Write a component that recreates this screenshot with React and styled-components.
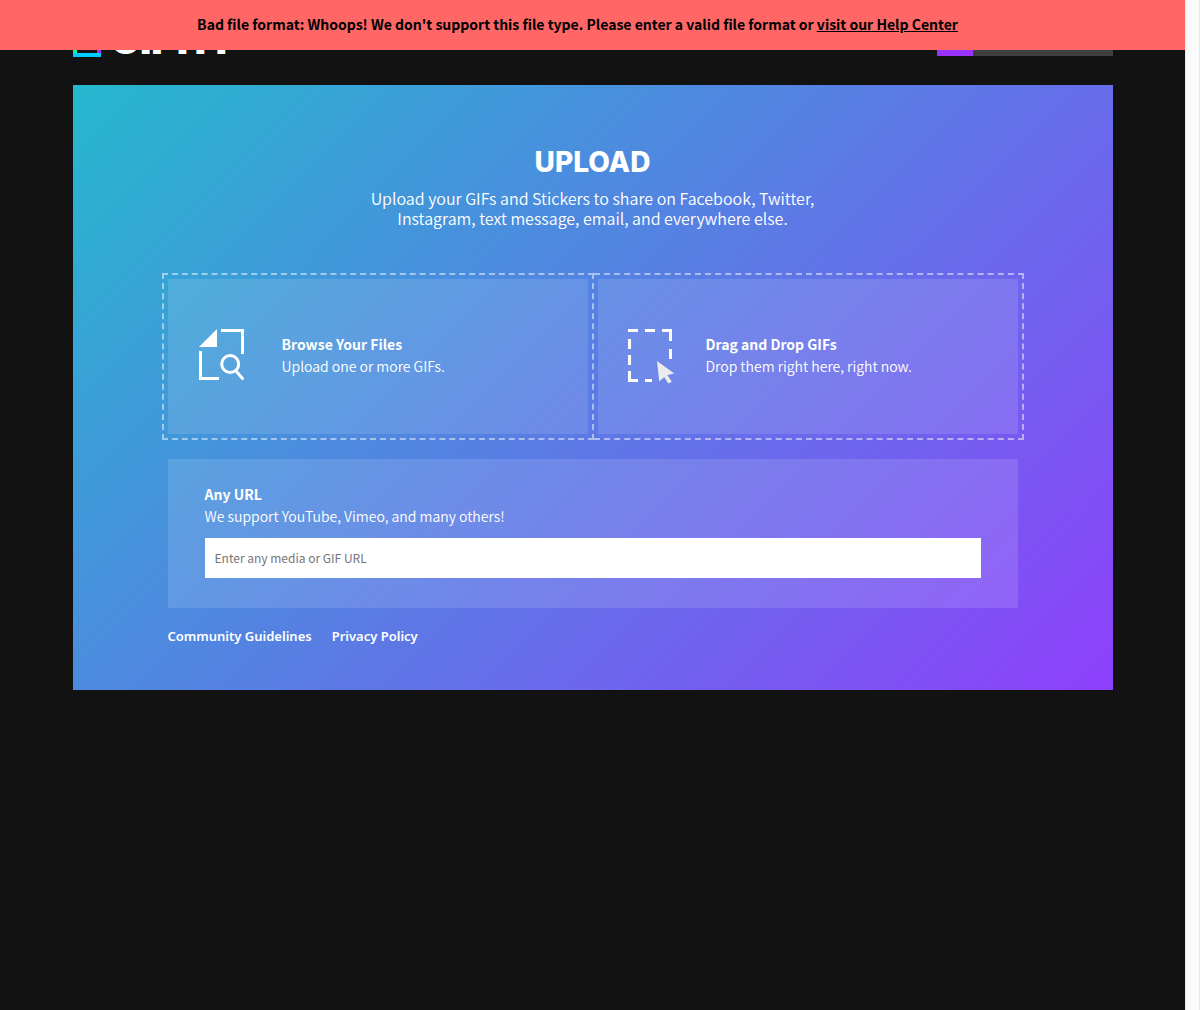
import React from "react";
import styled, { createGlobalStyle } from "styled-components";

const GlobalStyle = createGlobalStyle`
  *, *::before, *::after { box-sizing: border-box; }
  body {
    margin: 0;
    background: #121212;
    color: #fff;
    font-family: "Noto Sans CJK JP", "Noto Sans", sans-serif;
    font-size: 14px;
    line-height: 22px;
  }
`;

const Shell = styled.div`
  display: flex;
  min-height: 100vh;
`;

const Page = styled.div`
  position: relative;
  flex: 1;
  min-width: 0;
`;

const ScrollTrack = styled.div`
  flex: 0 0 15px;
  background: #fafafa;
  border: 1px solid #e8e8e8;
  border-width: 0 1px;
`;

const Banner = styled.div`
  position: absolute;
  top: 0;
  left: 0;
  right: 0;
  z-index: 2;
  padding: 13px 60px 15px 30px;
  background: #ff6666;
  color: #000;
  font-weight: 700;
  text-align: center;
`;

const BannerLink = styled.a`
  color: inherit;
  text-decoration: underline;
`;

const Container = styled.div`
  max-width: 1040px;
  margin: 0 auto;
`;

const Header = styled.header`
  display: flex;
  justify-content: space-between;
  align-items: flex-start;
  padding: 20px 0 28px;
`;

const Brand = styled.a`
  display: flex;
  align-items: flex-end;
  gap: 10px;
  color: #fff;
  text-decoration: none;
`;

const BrandName = styled.span`
  font-family: Inter, "Noto Sans", sans-serif;
  font-size: 39px;
  font-weight: 900;
  line-height: 35px;
`;

const Search = styled.form`
  display: flex;
  width: 176px;
  height: 36px;
`;

const SearchButton = styled.button`
  flex: 0 0 36px;
  padding: 0;
  border: 0;
  background: #9933ff;
`;

const SearchInput = styled.input`
  flex: 1;
  min-width: 0;
  border: 0;
  padding: 0 10px;
  background: #3e3e3e;
  color: #fff;
`;

const Panel = styled.main`
  padding: 63px 89px 43px;
  background: linear-gradient(135deg, #25b8ce, #8e40fb);
`;

const Title = styled.h1`
  margin: 0 0 12px;
  font-family: Inter, "Noto Sans", sans-serif;
  font-size: 28px;
  font-weight: 800;
  line-height: 28px;
  text-align: center;
`;

const Intro = styled.p`
  max-width: 460px;
  margin: 0 auto 45px;
  font-size: 16px;
  font-weight: 350;
  line-height: 20px;
  text-align: center;
`;

const Sources = styled.div`
  display: flex;
  margin-bottom: 19px;
`;

const Source = styled.div`
  box-sizing: content-box;
  flex: 1 1 0;
  padding: 4px;
  border: 2px dashed rgba(255, 255, 255, 0.5);

  & + & {
    border-left: 0;
  }
`;

const SourceButton = styled.button`
  display: flex;
  align-items: center;
  gap: 30px;
  width: 100%;
  padding: 50px 30px;
  border: 0;
  background: rgba(255, 255, 255, 0.12);
  color: inherit;
  font: inherit;
  text-align: left;
`;

const SourceText = styled.span`
  padding-bottom: 4px;
`;

const Icon = styled.svg`
  flex: none;
  display: block;
`;

const Strong = styled.span`
  display: block;
  font-weight: 700;
`;

const Light = styled.span`
  display: block;
  font-weight: 350;
`;

const UrlCard = styled.section`
  margin: 0 6px 17px;
  padding: 24px 37px 30px;
  background: rgba(255, 255, 255, 0.12);
`;

const UrlInput = styled.input`
  display: block;
  width: 100%;
  height: 40px;
  margin-top: 11px;
  padding: 0 10px 2px;
  border: 0;
  border-radius: 0;
  background: #fff;
  color: #121212;
  font: inherit;
  font-size: 12px;

  &::placeholder {
    color: #757575;
    opacity: 1;
  }
`;

const Links = styled.nav`
  display: flex;
  gap: 20px;
  margin: 0 6px;
`;

const FooterLink = styled.a`
  color: #fff;
  font-family: "Noto Sans", sans-serif;
  font-size: 13px;
  font-weight: 600;
  text-decoration: none;
`;

function LogoMark() {
  return (
    <Icon width="28" height="37" viewBox="0 0 28 37" aria-hidden="true">
      <path fill="#00ff99" d="M0 4h4v29H0z" />
      <path fill="#9933ff" d="M24 13h4v20h-4z" />
      <path fill="#00ccff" d="M0 33h28v4H0z" />
      <path fill="#fff35c" d="M0 0h16v4H0z" />
      <path fill="#ff6666" d="M16 0h4v8h8v5H16z" />
    </Icon>
  );
}

function BrowseIcon() {
  return (
    <Icon width="54" height="55" viewBox="0 0 54 55" fill="none" stroke="#fff" strokeWidth="3" aria-hidden="true">
      <path fill="#fff" stroke="none" d="M1 18 19 0v18z" />
      <path d="M23 1.500h21.500V25" />
      <path d="M2.500 22v27.500H21" />
      <circle cx="32.200" cy="35" r="8.500" />
      <path strokeLinecap="round" d="m38 42 6.500 7.500" />
    </Icon>
  );
}

function DragIcon() {
  return (
    <Icon width="48" height="55" viewBox="1 0 48 55" fill="#fff" aria-hidden="true">
      <path d="M1 0h10v3H1zM18 0h10v3H18zM35 0h10v12h-3V3h-7zM42 20h3v10h-3zM1 10h3v10H1zM1 26h3v10H1zM1 42h3v8h7v3H1zM18 50h7v3h-7z" />
      <path fill="#ececec" d="m30 32 17.300 12.500-7 1.500 4.500 6.700-3.500 1.800-4-6.500-5 4.500z" />
    </Icon>
  );
}

export default function App() {
  return (
    <>
      <GlobalStyle />
      <Shell>
        <Page>
          <Banner role="alert">
            Bad file format: Whoops! We don't support this file type. Please enter a valid file format or{" "}
            <BannerLink href="#help">visit our Help Center</BannerLink>
          </Banner>
          <Container>
            <Header>
              <Brand href="#home">
                <LogoMark />
                <BrandName>GIPHY</BrandName>
              </Brand>
              <Search>
                <SearchButton type="button" aria-label="Search" />
                <SearchInput type="search" aria-label="Search GIFs" />
              </Search>
            </Header>
            <Panel>
              <Title>UPLOAD</Title>
              <Intro>
                Upload your GIFs and Stickers to share on Facebook, Twitter, Instagram, text message, email, and
                everywhere else.
              </Intro>
              <Sources>
                <Source>
                  <SourceButton type="button">
                    <BrowseIcon />
                    <SourceText>
                      <Strong>Browse Your Files</Strong>
                      <Light>Upload one or more GIFs.</Light>
                    </SourceText>
                  </SourceButton>
                </Source>
                <Source>
                  <SourceButton type="button">
                    <DragIcon />
                    <SourceText>
                      <Strong>Drag and Drop GIFs</Strong>
                      <Light>Drop them right here, right now.</Light>
                    </SourceText>
                  </SourceButton>
                </Source>
              </Sources>
              <UrlCard>
                <label htmlFor="media-url">
                  <Strong>Any URL</Strong>
                  <Light>We support YouTube, Vimeo, and many others!</Light>
                </label>
                <UrlInput id="media-url" type="url" placeholder="Enter any media or GIF URL" />
              </UrlCard>
              <Links>
                <FooterLink href="#guidelines">Community Guidelines</FooterLink>
                <FooterLink href="#privacy">Privacy Policy</FooterLink>
              </Links>
            </Panel>
          </Container>
        </Page>
        <ScrollTrack />
      </Shell>
    </>
  );
}
